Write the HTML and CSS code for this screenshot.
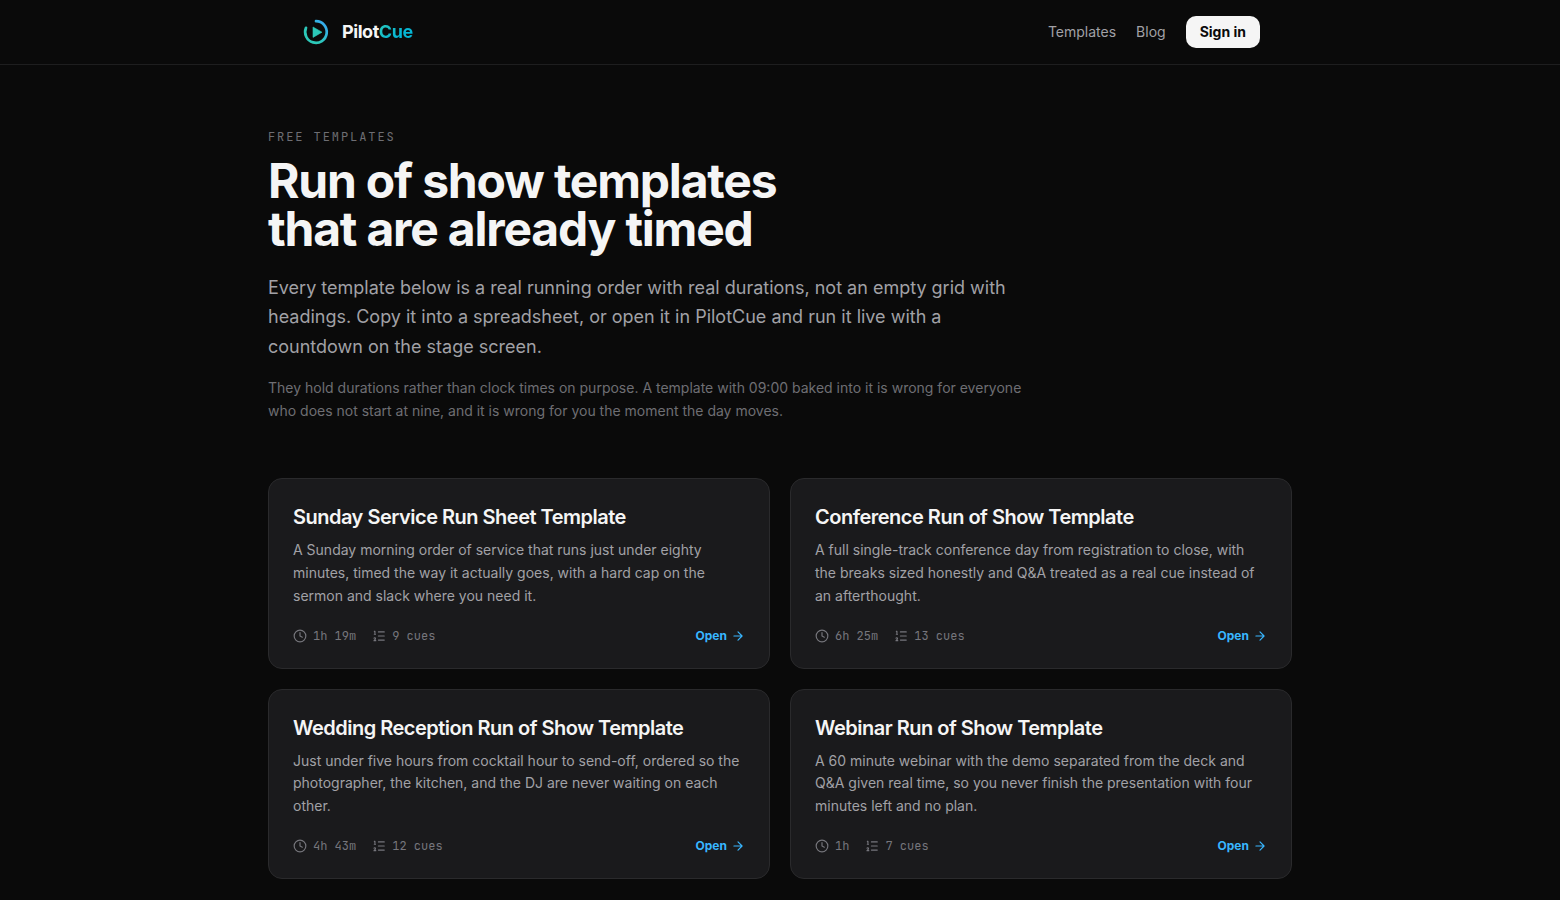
FILE: index.html
```html
<!DOCTYPE html>
<html lang="en">
<head>
    <meta charset="UTF-8">
    <meta name="viewport" content="width=device-width, initial-scale=1.0">
    <title>Run of Show Templates | PilotCue</title>
    <link rel="stylesheet" href="styles.css">
</head>
<body>
    <!-- shared icons -->
    <svg width="0" height="0" class="sprite" aria-hidden="true">
        <symbol id="clock" viewBox="0 0 24 24">
            <circle cx="12" cy="12" r="10"/>
            <path d="M12 6v6l4 2"/>
        </symbol>
        <symbol id="list" viewBox="0 0 24 24">
            <path d="M11 5h10M11 12h10M11 19h10M4 4h1v5M4 9h2M6.5 20H3.4c0-1 2.6-1.925 2.6-3.5a1.5 1.5 0 0 0-2.6-1.02"/>
        </symbol>
        <symbol id="arrow" viewBox="0 0 24 24">
            <path d="M5 12h14M12 5l7 7-7 7"/>
        </symbol>
    </svg>

    <header class="header">
        <div class="header-inner">
            <a class="logo" href="#">
                <svg class="logo-mark" viewBox="0 0 32 32" fill="none">
                    <defs>
                        <linearGradient id="markGradient" x1="0" y1="1" x2="1" y2="0">
                            <stop offset="0.35" stop-color="#2cc8b8"/>
                            <stop offset="1" stop-color="#38a5f8"/>
                        </linearGradient>
                    </defs>
                    <path d="M16 5.2A10.8 10.8 0 1 1 6 11.8" stroke="url(#markGradient)" stroke-width="2.7" stroke-linecap="round"/>
                    <path d="M13 11v10.4l9-5.2z" fill="#2cc8b8" stroke="#2cc8b8" stroke-width="0.6" stroke-linejoin="round"/>
                </svg>
                <span class="logo-text">Pilot<span class="logo-accent">Cue</span></span>
            </a>
            <nav class="nav">
                <a href="#">Templates</a>
                <a href="#">Blog</a>
                <a class="signin" href="#">Sign in</a>
            </nav>
        </div>
    </header>

    <main class="main">
        <section class="intro">
            <p class="eyebrow">Free templates</p>
            <h1>Run of show templates<br>that are already timed</h1>
            <p class="lead">Every template below is a real running order with real durations, not an empty grid with headings. Copy it into a spreadsheet, or open it in PilotCue and run it live with a countdown on the stage screen.</p>
            <p class="note">They hold durations rather than clock times on purpose. A template with 09:00 baked into it is wrong for everyone who does not start at nine, and it is wrong for you the moment the day moves.</p>
        </section>

        <section class="grid">
            <a class="card" href="#">
                <h2>Sunday Service Run Sheet Template</h2>
                <p>A Sunday morning order of service that runs just under eighty minutes, timed the way it actually goes, with a hard cap on the sermon and slack where you need it.</p>
                <div class="meta">
                    <span class="meta-item"><svg class="icon"><use href="#clock"/></svg>1h 19m</span>
                    <span class="meta-item"><svg class="icon"><use href="#list"/></svg>9 cues</span>
                    <span class="open">Open<svg class="icon"><use href="#arrow"/></svg></span>
                </div>
            </a>
            <a class="card" href="#">
                <h2>Conference Run of Show Template</h2>
                <p>A full single-track conference day from registration to close, with the breaks sized honestly and Q&amp;A treated as a real cue instead of an afterthought.</p>
                <div class="meta">
                    <span class="meta-item"><svg class="icon"><use href="#clock"/></svg>6h 25m</span>
                    <span class="meta-item"><svg class="icon"><use href="#list"/></svg>13 cues</span>
                    <span class="open">Open<svg class="icon"><use href="#arrow"/></svg></span>
                </div>
            </a>
            <a class="card" href="#">
                <h2>Wedding Reception Run of Show Template</h2>
                <p>Just under five hours from cocktail hour to send-off, ordered so the photographer, the kitchen, and the DJ are never waiting on each other.</p>
                <div class="meta">
                    <span class="meta-item"><svg class="icon"><use href="#clock"/></svg>4h 43m</span>
                    <span class="meta-item"><svg class="icon"><use href="#list"/></svg>12 cues</span>
                    <span class="open">Open<svg class="icon"><use href="#arrow"/></svg></span>
                </div>
            </a>
            <a class="card" href="#">
                <h2>Webinar Run of Show Template</h2>
                <p>A 60 minute webinar with the demo separated from the deck and Q&amp;A given real time, so you never finish the presentation with four minutes left and no plan.</p>
                <div class="meta">
                    <span class="meta-item"><svg class="icon"><use href="#clock"/></svg>1h</span>
                    <span class="meta-item"><svg class="icon"><use href="#list"/></svg>7 cues</span>
                    <span class="open">Open<svg class="icon"><use href="#arrow"/></svg></span>
                </div>
            </a>
        </section>
    </main>
</body>
</html>
```
FILE: styles.css
```css
* {
    box-sizing: border-box;
    margin: 0;
    padding: 0;
}
body {
    font-family: Inter, sans-serif;
    background-color: #0a0a0a;
    color: #f5f5f5;
    height: 100vh;
    overflow: hidden;
}
a {
    color: inherit;
    text-decoration: none;
}
.sprite {
    display: none;
}
.header {
    border-bottom: 1px solid #1e1e1f;
}
.header-inner {
    display: flex;
    align-items: center;
    justify-content: space-between;
    max-width: 1024px;
    height: 64px;
    margin: 0 auto;
    padding: 0 32px;
}
.logo {
    display: flex;
    align-items: center;
    gap: 10px;
}
.logo-mark {
    width: 32px;
    height: 32px;
}
.logo-text {
    font-size: 18px;
    font-weight: 700;
    line-height: 28px;
    letter-spacing: -0.025em;
}
.logo-accent {
    background: linear-gradient(135deg, #2dc8b8, #06b6d4 60%);
    background-clip: text;
    -webkit-background-clip: text;
    color: transparent;
}
.nav {
    display: flex;
    align-items: center;
    gap: 20px;
    font-size: 14px;
    line-height: 20px;
    color: #a1a1a6;
}
.signin {
    padding: 6px 14px;
    border-radius: 10px;
    background-color: #f5f5f5;
    color: #0a0a0a;
    font-weight: 700;
}
.main {
    max-width: 1024px;
    margin: 0 auto;
    padding-top: 64px;
}
.intro {
    max-width: 768px;
}
.eyebrow {
    font-family: "JetBrains Mono", "Liberation Mono", monospace;
    font-size: 12px;
    line-height: 16px;
    letter-spacing: 0.16em;
    text-transform: uppercase;
    color: #6e6e73;
}
h1 {
    margin-top: 12px;
    font-size: 48px;
    font-weight: 700;
    line-height: 48px;
    letter-spacing: -0.025em;
}
.lead {
    margin-top: 20px;
    font-size: 18px;
    line-height: 1.625;
    color: #a1a1a6;
}
.note {
    margin-top: 16px;
    font-size: 14px;
    line-height: 1.625;
    color: #6e6e73;
}
.grid {
    display: grid;
    grid-template-columns: 1fr 1fr;
    gap: 20px;
    margin-top: 56px;
}
.card {
    padding: 24px;
    border: 1px solid #2a2a2c;
    border-radius: 14px;
    background-color: #1a1a1c;
}
.card h2 {
    font-size: 20px;
    font-weight: 600;
    line-height: 28px;
    letter-spacing: -0.025em;
}
.card p {
    margin-top: 8px;
    font-size: 14px;
    line-height: 1.625;
    color: #a1a1a6;
}
.meta {
    display: flex;
    align-items: center;
    gap: 16px;
    margin-top: 20px;
    font-family: "JetBrains Mono", "Liberation Mono", monospace;
    font-size: 12px;
    line-height: 16px;
    color: #76767c;
}
.meta-item,
.open {
    display: flex;
    align-items: center;
    gap: 6px;
}
.open {
    gap: 4px;
    margin-left: auto;
    font-family: Inter, sans-serif;
    font-weight: 700;
    color: #38b6ff;
}
.icon {
    width: 14px;
    height: 14px;
    fill: none;
    stroke: currentColor;
    stroke-width: 2;
    stroke-linecap: round;
    stroke-linejoin: round;
}
```
